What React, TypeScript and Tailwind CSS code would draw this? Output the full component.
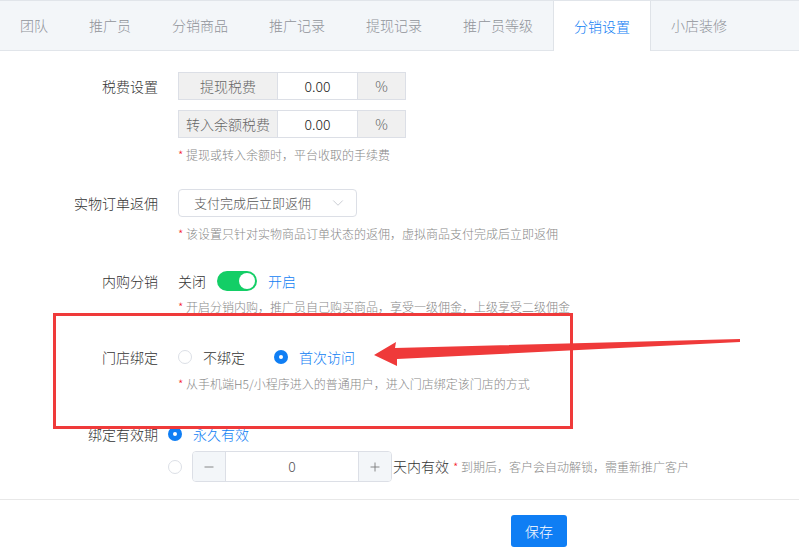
import { ChevronDown, Minus, Plus } from 'lucide-react'

const tabs = ['团队', '推广员', '分销商品', '推广记录', '提现记录', '推广员等级', '分销设置', '小店装修']
const active = '分销设置'

const Hint = ({ text, className = '' }: { text: string; className?: string }) => (
  <div className={`text-[12px] leading-[18px] text-[#888] ${className}`}>
    <span className="text-[#f5222d]">*</span> {text}
  </div>
)

const Label = ({ text }: { text: string }) => (
  <div className="w-[158px] shrink-0 text-right text-[14px] leading-[28px] text-[#333]">{text}</div>
)

const Radio = ({ checked }: { checked?: boolean }) =>
  checked ? (
    <span className="flex h-[14px] w-[14px] items-center justify-center rounded-full bg-[#0f7ef4]">
      <span className="h-[4px] w-[4px] rounded-full bg-white" />
    </span>
  ) : (
    <span className="h-[14px] w-[14px] rounded-full border border-[#dcdfe6] bg-white" />
  )

const TaxRow = ({ name }: { name: string }) => (
  <div className="flex h-[28px] w-[228px] border border-[#dcdfe6] text-[14px]">
    <div className="flex w-[99px] items-center justify-center border-r border-[#dcdfe6] bg-[#f0f0f0] text-[#666]">
      {name}
    </div>
    <div className="flex w-[79px] items-center justify-center text-[#222]">0.00</div>
    <div className="flex flex-1 items-center justify-center border-l border-[#dcdfe6] bg-[#f0f0f0] text-[#666]">
      %
    </div>
  </div>
)

export default function App() {
  return (
    <div
      className="relative h-[552px] w-[799px] overflow-hidden bg-white font-light"
      style={{ fontFamily: '"Noto Sans CJK SC", "Liberation Sans", sans-serif' }}
    >
      <div className="flex h-[51px] border-y border-[#e1e5ea] bg-[#f3f6f9]">
        {tabs.map((t, i) =>
          t === active ? (
            <div
              key={t}
              className="-mb-px -mr-px flex items-center border-x border-[#dfe3e8] bg-white px-5 text-[14px] text-[#0f7ef4]"
            >
              {t}
            </div>
          ) : (
            <div
              key={t}
              className={`flex items-center px-5 text-[14px] text-[#909399] ${i > 0 ? 'border-l border-transparent' : ''}`}
            >
              {t}
            </div>
          ),
        )}
      </div>

      <div className="flex flex-col pt-[21px]">
        <div className="flex">
          <Label text="税费设置" />
          <div className="ml-5 flex flex-col">
            <div className="flex flex-col gap-[10px]">
              <TaxRow name="提现税费" />
              <TaxRow name="转入余额税费" />
            </div>
            <Hint text="提现或转入余额时，平台收取的手续费" className="mt-2" />
          </div>
        </div>

        <div className="mt-[25px] flex">
          <Label text="实物订单返佣" />
          <div className="ml-5 flex flex-col">
            <div className="flex h-[28px] w-[179px] items-center justify-between rounded-[4px] border border-[#dcdfe6] pl-[15px] pr-[9px] text-[13px] text-[#555]">
              <span>支付完成后立即返佣</span>
              <ChevronDown size={18} strokeWidth={1} className="text-[#b8bcc4]" />
            </div>
            <Hint text="该设置只针对实物商品订单状态的返佣，虚拟商品支付完成后立即返佣" className="mt-2" />
          </div>
        </div>

        <div className="mt-[24px] flex">
          <Label text="内购分销" />
          <div className="ml-5 flex flex-col">
            <div className="flex h-[28px] items-center text-[14px]">
              <span className="text-[#333]">关闭</span>
              <span className="ml-[11px] flex h-[20px] w-[40px] items-center justify-end rounded-full bg-[#13ce66] pr-[2px]">
                <span className="h-[16px] w-[16px] rounded-full bg-white" />
              </span>
              <span className="ml-[11px] text-[#0f7ef4]">开启</span>
            </div>
            <Hint text="开启分销内购，推广员自己购买商品，享受一级佣金，上级享受二级佣金" className="mt-[3px]" />
          </div>
        </div>

        <div className="mt-[27px] flex">
          <Label text="门店绑定" />
          <div className="ml-5 flex flex-col">
            <div className="flex h-[28px] items-center text-[14px]">
              <Radio />
              <span className="ml-[11px] text-[#333]">不绑定</span>
              <span className="ml-[29px]" />
              <Radio checked />
              <span className="ml-[11px] text-[#0f7ef4]">首次访问</span>
            </div>
            <Hint text="从手机端H5/小程序进入的普通用户，进入门店绑定该门店的方式" className="mt-[4px]" />
          </div>
        </div>

        <div className="mt-[27px] flex">
          <Label text="绑定有效期" />
          <div className="ml-[10px] flex flex-col">
            <div className="flex h-[28px] items-center text-[14px]">
              <Radio checked />
              <span className="ml-[11px] text-[#0f7ef4]">永久有效</span>
            </div>
            <div className="mt-[3px] flex items-center text-[14px]">
              <Radio />
              <div className="ml-[10px] flex h-[31px] w-[200px] overflow-hidden rounded-[4px] border border-[#dcdfe6]">
                <div className="flex w-[33px] items-center justify-center border-r border-[#dcdfe6] bg-[#f3f6f9] text-[#777]">
                  <Minus size={14} strokeWidth={1.5} />
                </div>
                <div className="flex flex-1 items-center justify-center text-[#555]">0</div>
                <div className="flex w-[33px] items-center justify-center border-l border-[#dcdfe6] bg-[#f3f6f9] text-[#777]">
                  <Plus size={14} strokeWidth={1.5} />
                </div>
              </div>
              <span className="ml-[1px] text-[#333]">天内有效</span>
              <span className="ml-[4px] text-[12px] text-[#888]">
                <span className="text-[#f5222d]">*</span> 到期后，客户会自动解锁，需重新推广客户
              </span>
            </div>
          </div>
        </div>

        <div className="mt-[17px] border-t border-[#e8e8e8]" />

        <div className="mt-[15px] pl-[511px]">
          <button className="flex h-[32px] w-[56px] items-center justify-center rounded-[3px] bg-[#0f7ef4] text-[14px] text-white">
            保存
          </button>
        </div>
      </div>

      <div className="pointer-events-none absolute left-[53px] top-[313px] h-[116px] w-[520px] border-[3px] border-[#ef3a3a]" />
      <svg className="pointer-events-none absolute left-0 top-0" width="799" height="552">
        <polygon
          points="374,355 396,342 395,348 740,339 740,342 397,359 397,366"
          fill="#ef3a3a"
        />
      </svg>
    </div>
  )
}
